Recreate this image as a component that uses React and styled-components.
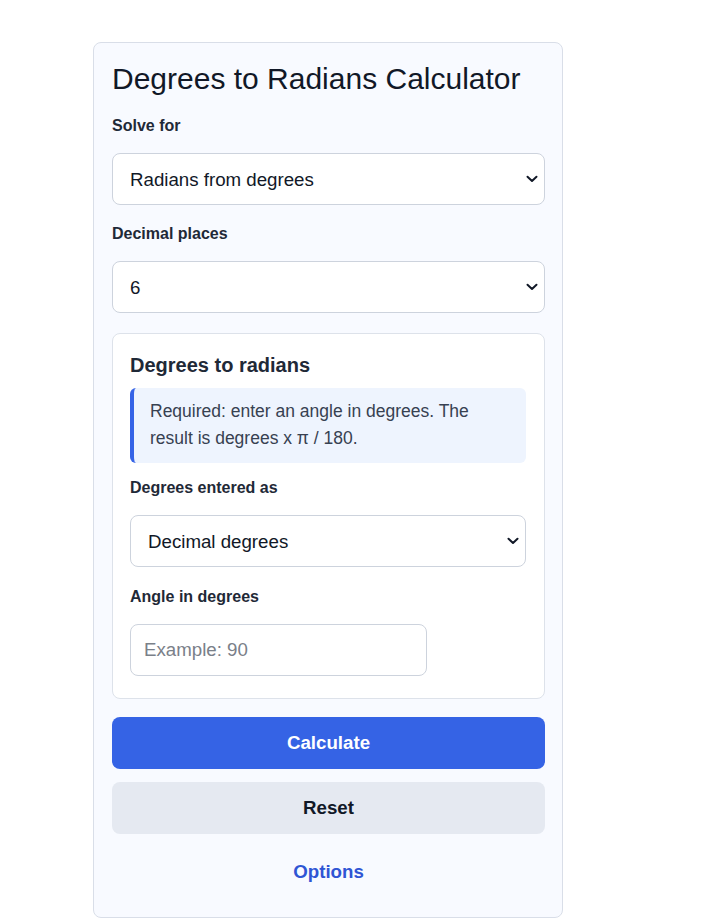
import React from "react";
import styled, { createGlobalStyle } from "styled-components";

const Global = createGlobalStyle`
  html, body { margin: 0; padding: 0; background: #ffffff; }
  body { font-family: "Liberation Sans", Arial, sans-serif; color: #111827; }
  * { box-sizing: border-box; }
`;

const Page = styled.div`
  padding: 42px 0 0 93px;
`;

const Card = styled.div`
  width: 470px;
  background: #f8faff;
  border: 1px solid #d9dee8;
  border-radius: 8px;
  padding: 19px 17px 19px 18px;
  display: flex;
  flex-direction: column;
`;

const Title = styled.h1`
  margin: 0;
  font-size: 30px;
  font-weight: 400;
  line-height: 34px;
  color: #111827;
`;

const Label = styled.label`
  display: block;
  font-size: 16px;
  font-weight: 700;
  line-height: 18px;
  color: #1f2937;
  margin-top: ${(p) => p.$top || 20}px;
  margin-bottom: 18px;
`;

const SelectWrap = styled.div`
  position: relative;
  width: 100%;
`;

const Select = styled.select`
  appearance: none;
  -webkit-appearance: none;
  width: 100%;
  height: 52px;
  padding: 0 36px 0 17px;
  font-family: "Liberation Sans", Arial, sans-serif;
  font-size: 18.7px;
  color: #111827;
  background: #ffffff;
  border: 1px solid #cdd3dd;
  border-radius: 8px;
  outline: none;
`;

const Chevron = styled.svg`
  position: absolute;
  right: 7px;
  top: 50%;
  transform: translateY(-50%);
  pointer-events: none;
`;

const Dropdown = ({ value }) => (
  <SelectWrap>
    <Select defaultValue={value}>
      <option>{value}</option>
    </Select>
    <Chevron width="12" height="8" viewBox="0 0 12 8">
      <path d="M1.5 1.8 L6 6 L10.5 1.8" fill="none" stroke="#111827" strokeWidth="2" strokeLinecap="round" strokeLinejoin="round" />
    </Chevron>
  </SelectWrap>
);

const Panel = styled.section`
  margin-top: 20px;
  background: #ffffff;
  border: 1px solid #dde2ea;
  border-radius: 8px;
  padding: 19px 18px 22px 17px;
`;

const PanelTitle = styled.h2`
  margin: 0;
  font-size: 20px;
  font-weight: 700;
  line-height: 24px;
  color: #1f2937;
`;

const Note = styled.div`
  margin-top: 11px;
  background: #eef4fe;
  border-left: 4px solid #3563e6;
  border-radius: 6px;
  padding: 10px 16px 11px;
  font-size: 17.5px;
  line-height: 27px;
  color: #374151;
`;

const Input = styled.input`
  display: block;
  width: 297px;
  height: 52px;
  padding: 0 13px;
  font-family: "Liberation Sans", Arial, sans-serif;
  font-size: 18.7px;
  color: #111827;
  background: #ffffff;
  border: 1px solid #cdd3dd;
  border-radius: 8px;
  outline: none;
  &::placeholder { color: #7a8089; }
`;

const Button = styled.button`
  width: 100%;
  height: 52px;
  border: none;
  border-radius: 8px;
  font-family: "Liberation Sans", Arial, sans-serif;
  font-size: 18.7px;
  font-weight: 700;
  cursor: pointer;
  margin-top: ${(p) => p.$top}px;
  background: ${(p) => (p.$variant === "primary" ? "#3563e5" : p.$variant === "secondary" ? "#e5e9f1" : "transparent")};
  color: ${(p) => (p.$variant === "primary" ? "#ffffff" : p.$variant === "secondary" ? "#111827" : "#2f55d4")};
`;

export default function App() {
  return (
    <>
      <Global />
      <Page>
        <Card>
          <Title>Degrees to Radians Calculator</Title>
          <Label $top={21}>Solve for</Label>
          <Dropdown value="Radians from degrees" />
          <Label>Decimal places</Label>
          <Dropdown value="6" />
          <Panel>
            <PanelTitle>Degrees to radians</PanelTitle>
            <Note>Required: enter an angle in degrees. The result is degrees x π / 180.</Note>
            <Label $top={16}>Degrees entered as</Label>
            <Dropdown value="Decimal degrees" />
            <Label $top={21}>Angle in degrees</Label>
            <Input placeholder="Example: 90" />
          </Panel>
          <Button $variant="primary" $top={18}>Calculate</Button>
          <Button $variant="secondary" $top={13}>Reset</Button>
          <Button $variant="link" $top={12}>Options</Button>
        </Card>
      </Page>
    </>
  );
}
